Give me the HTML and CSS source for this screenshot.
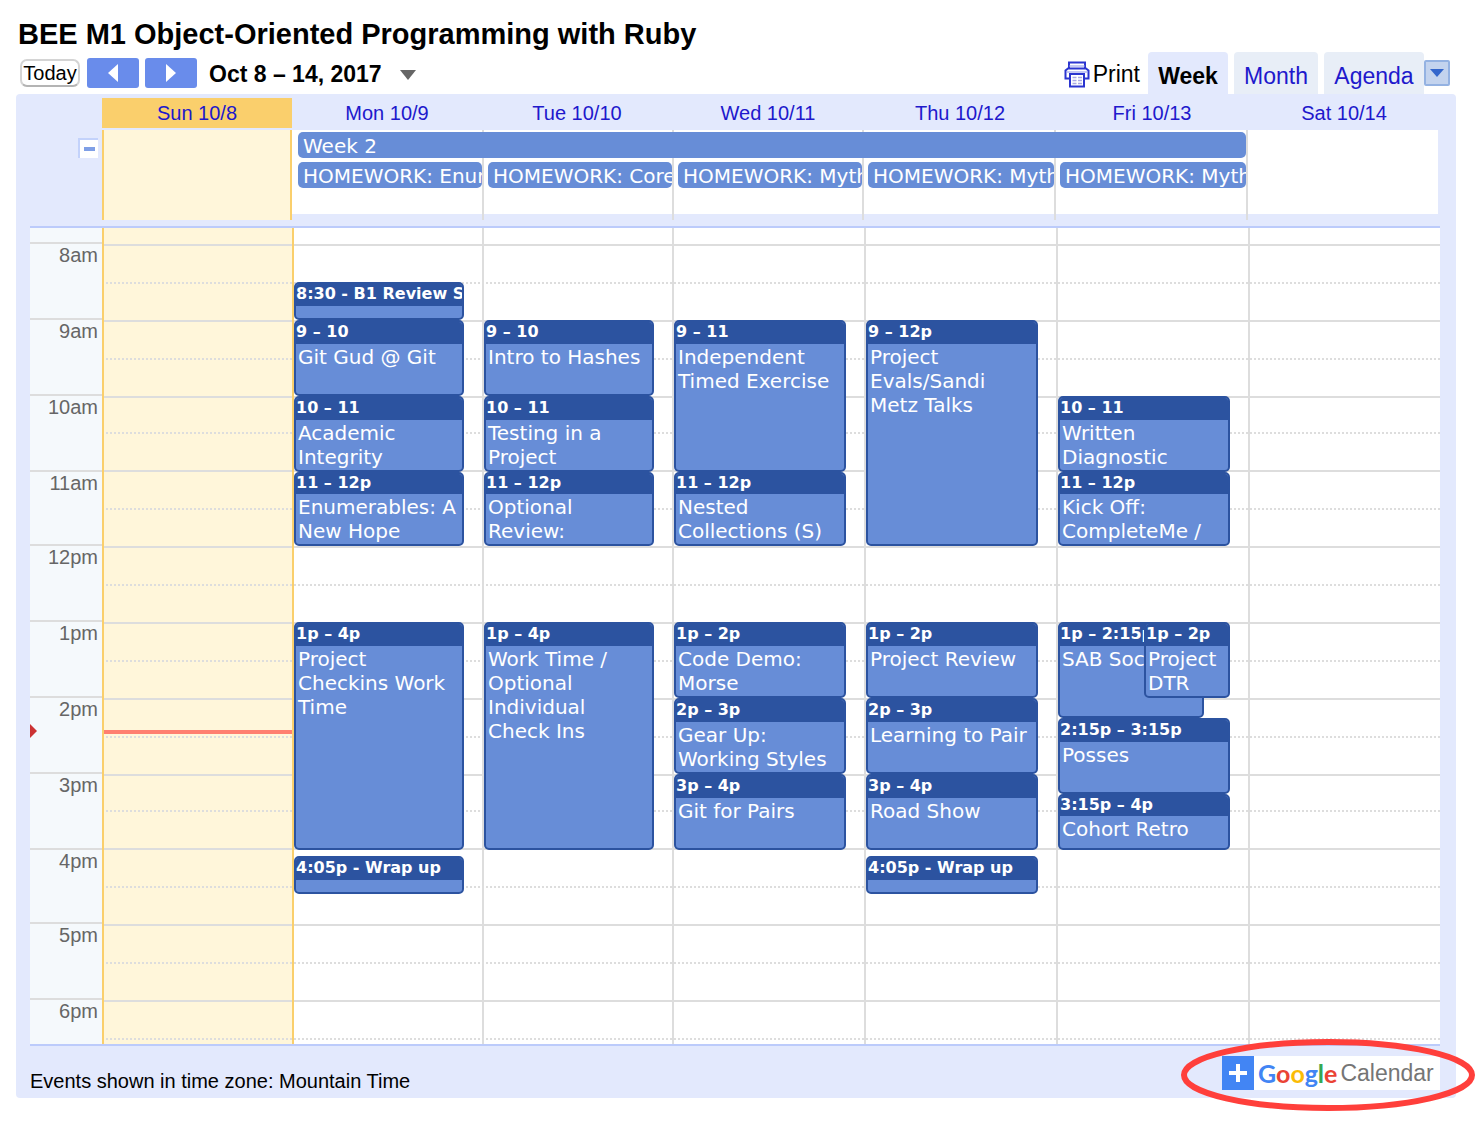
FILE: index.html
```html
<!DOCTYPE html>
<html lang="en">
<head>
<meta charset="utf-8">
<title>BEE M1 Object-Oriented Programming with Ruby</title>
<link rel="stylesheet" href="styles.css">
</head>
<body>
<main class="calendar">
  <h1 class="title">BEE M1 Object-Oriented Programming with Ruby</h1>

  <div class="toolbar">
    <button class="today" type="button">Today</button>
    <button class="step" type="button" aria-label="Previous week"><svg width="10" height="18" viewBox="0 0 10 18"><path d="M10 0V18L0 9z" fill="#fff"/></svg></button>
    <button class="step" type="button" aria-label="Next week"><svg width="10" height="18" viewBox="0 0 10 18"><path d="M0 0V18L10 9z" fill="#fff"/></svg></button>
    <h2 class="range">Oct 8 – 14, 2017</h2>
    <button class="pick" type="button" aria-label="Choose date"><svg width="16" height="10" viewBox="0 0 16 10"><path d="M0 0H16L8 10z" fill="#666"/></svg></button>

    <a class="print" href="#">
      <svg width="26" height="27" viewBox="0 0 26 27" fill="none" stroke="#2b35d0" stroke-width="2">
        <path d="M5 8V1.500H21V8" fill="#fff"/>
        <path d="M5 5H21" stroke="#8b93ea" stroke-width="1"/>
        <path d="M5 17.500H1.500V9.500L4 7.500H22L24.500 9.500V17.500H21" fill="#fff"/>
        <path d="M3 11H23" stroke="#8b93ea" stroke-width="1"/>
        <path d="M6 13H20V25.500H6z" fill="#fff"/>
        <path d="M8.500 16.500H18M8.500 19.500H18M8.500 22.500H18" stroke="#a9a9e4" stroke-width="1.500" stroke-dasharray="4 1.500"/>
      </svg>
      <span>Print</span>
    </a>
    <nav class="tabs">
      <a class="tab tab-active" href="#">Week</a>
      <a class="tab" href="#">Month</a>
      <a class="tab" href="#">Agenda</a>
    </nav>
    <button class="more" type="button" aria-label="More calendars"><svg width="14" height="8" viewBox="0 0 14 8"><path d="M0 0H14L7 8z" fill="#3366cc"/></svg></button>
  </div>

  <section class="panel">
    <div class="head-row">
      <a class="day-name day-name-today" href="#">Sun 10/8</a>
      <a class="day-name" href="#">Mon 10/9</a>
      <a class="day-name" href="#">Tue 10/10</a>
      <a class="day-name" href="#">Wed 10/11</a>
      <a class="day-name" href="#">Thu 10/12</a>
      <a class="day-name" href="#">Fri 10/13</a>
      <a class="day-name" href="#">Sat 10/14</a>
    </div>

    <div class="allday">
      <button class="collapse" type="button" aria-label="Collapse all-day events"></button>
      <div class="cell cell-today"></div>
      <div class="cell cell-mon"></div>
      <div class="cell cell-tue"></div>
      <div class="cell cell-wed"></div>
      <div class="cell cell-thu"></div>
      <div class="cell cell-fri"></div>
      <div class="cell cell-sat"></div>
      <div class="bar bar-week">Week 2</div>
      <div class="bar bar-mon">HOMEWORK: Enumerables</div>
      <div class="bar bar-tue">HOMEWORK: Core Types</div>
      <div class="bar bar-wed">HOMEWORK: Mythical Creatures</div>
      <div class="bar bar-thu">HOMEWORK: Mythical Creatures</div>
      <div class="bar bar-fri">HOMEWORK: Mythical Creatures</div>
    </div>

    <div class="schedule">
      <div class="hours">
        <span>8am</span><span>9am</span><span>10am</span><span>11am</span><span>12pm</span><span>1pm</span><span>2pm</span><span>3pm</span><span>4pm</span><span>5pm</span><span>6pm</span>
      </div>
      <svg class="now-marker" width="7" height="14" viewBox="0 0 7 14"><path d="M0 0L7 7L0 14z" fill="#cc3333"/></svg>

      <div class="today-fill"></div>
      <div class="lines">
        <i></i><i></i><i></i><i></i><i></i><i></i><i></i><i></i><i></i><i></i><i></i><i></i><i></i><i></i><i></i><i></i><i></i><i></i><i></i><i></i><i></i><i></i>
      </div>
      <div class="now-line"></div>

      <div class="day day-sun"></div>

      <div class="day day-mon">
        <div class="event from-0830 to-0900"><h3>8:30 - B1 Review Session</h3></div>
        <div class="event from-0900 to-1000"><h3>9 – 10</h3><p>Git Gud @ Git</p></div>
        <div class="event from-1000 to-1100"><h3>10 – 11</h3><p>Academic Integrity</p></div>
        <div class="event tight from-1100 to-1200"><h3>11 – 12p</h3><p>Enumerables: A New Hope</p></div>
        <div class="event from-1300 to-1600"><h3>1p – 4p</h3><p>Project Checkins Work Time</p></div>
        <div class="event wrap-up"><h3>4:05p - Wrap up</h3></div>
      </div>

      <div class="day day-tue">
        <div class="event from-0900 to-1000"><h3>9 – 10</h3><p>Intro to Hashes</p></div>
        <div class="event from-1000 to-1100"><h3>10 – 11</h3><p>Testing in a Project</p></div>
        <div class="event tight from-1100 to-1200"><h3>11 – 12p</h3><p>Optional Review:</p></div>
        <div class="event from-1300 to-1600"><h3>1p – 4p</h3><p>Work Time / Optional Individual Check Ins</p></div>
      </div>

      <div class="day day-wed">
        <div class="event from-0900 to-1100"><h3>9 – 11</h3><p>Independent Timed Exercise</p></div>
        <div class="event tight from-1100 to-1200"><h3>11 – 12p</h3><p>Nested Collections (S)</p></div>
        <div class="event from-1300 to-1400"><h3>1p – 2p</h3><p>Code Demo: Morse</p></div>
        <div class="event from-1400 to-1500"><h3>2p – 3p</h3><p>Gear Up: Working Styles</p></div>
        <div class="event from-1500 to-1600"><h3>3p – 4p</h3><p>Git for Pairs</p></div>
      </div>

      <div class="day day-thu">
        <div class="event from-0900 to-1200"><h3>9 – 12p</h3><p>Project Evals/Sandi Metz Talks</p></div>
        <div class="event from-1300 to-1400"><h3>1p – 2p</h3><p>Project Review</p></div>
        <div class="event from-1400 to-1500"><h3>2p – 3p</h3><p>Learning to Pair</p></div>
        <div class="event from-1500 to-1600"><h3>3p – 4p</h3><p>Road Show</p></div>
        <div class="event wrap-up"><h3>4:05p - Wrap up</h3></div>
      </div>

      <div class="day day-fri">
        <div class="event from-1000 to-1100"><h3>10 – 11</h3><p>Written Diagnostic</p></div>
        <div class="event tight from-1100 to-1200"><h3>11 – 12p</h3><p>Kick Off: CompleteMe /</p></div>
        <div class="event under from-1300 to-1415"><h3>1p – 2:15p</h3><p>SAB Social</p></div>
        <div class="event over from-1300 to-1400"><h3>1p – 2p</h3><p>Project DTR</p></div>
        <div class="event from-1415 to-1515"><h3>2:15p – 3:15p</h3><p>Posses</p></div>
        <div class="event tight from-1515 to-1600"><h3>3:15p – 4p</h3><p>Cohort Retro</p></div>
      </div>

      <div class="day day-sat"></div>
    </div>

    <footer class="footer">
      <span class="zone">Events shown in time zone: Mountain Time</span>
      <a class="gcal" href="#">
        <svg class="plus" width="32" height="34" viewBox="0 0 32 34"><path fill="#4285f4" d="M0 0H32V34H0z"/><path d="M16 8V26M7 17H25" stroke="#fff" stroke-width="4"/></svg>
        <span class="google"><b class="blue">G</b><b class="red">o</b><b class="yellow">o</b><b class="blue">g</b><b class="green">l</b><b class="red">e</b></span>
        <span class="product">Calendar</span>
        <svg class="ring" width="296" height="74" viewBox="0 0 296 74"><ellipse cx="148" cy="37" rx="144" ry="33" fill="none" stroke="#ff3f3b" stroke-width="6"/></svg>
      </a>
    </footer>
  </section>
</main>
</body>
</html>
```

FILE: styles.css
```css
* { box-sizing: border-box; }

body {
  margin: 0;
  background: #fff;
  color: #000;
  font: 20px/24px "Liberation Sans", Arial, sans-serif;
}

h1, h2, h3, p { margin: 0; }
a { color: #2018cc; text-decoration: none; }
button { font: inherit; padding: 0; border: 0; cursor: pointer; }
svg { display: block; flex: none; }

.calendar { padding: 16px 24px 24px 16px; }

.title {
  padding-left: 2px;
  font-size: 29px;
  line-height: 36px;
}

/* Toolbar */
.toolbar {
  display: flex;
  align-items: center;
  height: 42px;
  padding: 0 6px 0 4px;
}
.today {
  width: 60px;
  height: 28px;
  margin-right: 7px;
  border: 2px solid #d4d4d4;
  border-bottom-color: #b4b4b4;
  border-radius: 7px;
  background: #fff;
  color: #000;
}
.step {
  display: flex;
  align-items: center;
  justify-content: center;
  width: 52px;
  height: 30px;
  margin-right: 6px;
  border-radius: 3px;
  background: #698ceb;
}
.range {
  margin-left: 6px;
  padding-top: 2px;
  font-size: 23px;
}
.pick {
  margin-left: 18px;
  padding-top: 4px;
  background: none;
}
.print {
  display: flex;
  align-items: center;
  gap: 3px;
  margin-left: auto;
  margin-right: 8px;
  padding-top: 2px;
  color: #000;
  font-size: 23px;
}
.tabs {
  display: grid;
  grid-template-columns: 80px 84px 100px;
  gap: 6px;
  align-self: stretch;
}
.tab {
  padding-top: 12px;
  border-radius: 4px 4px 0 0;
  background: #e8eef7;
  font-size: 23px;
  text-align: center;
}
.tab-active {
  background: #e3e9fd;
  color: #000;
  font-weight: bold;
}
.more {
  display: flex;
  align-items: center;
  justify-content: center;
  width: 26px;
  height: 26px;
  border: 2px solid #94b2e2;
  border-radius: 2px;
  background: #c3d3ee;
}

/* Panel */
.panel {
  padding: 4px 16px 5px 14px;
  border-radius: 4px;
  background: #e3e9fd;
}

.head-row {
  display: grid;
  grid-template-columns: 72px repeat(3, 190fr) repeat(4, 192fr);
  margin-bottom: 2px;
}
.day-name {
  line-height: 30px;
  text-align: center;
}
.day-name:first-child { grid-column: 2; }
.day-name-today { background: #facf6c; }

.allday {
  display: grid;
  grid-template-columns: 72px repeat(4, 190fr) repeat(3, 192fr);
  grid-template-rows: repeat(3, 30px);
  margin: 0 2px 6px 0;
}
.collapse {
  grid-area: 1 / 1;
  justify-self: end;
  width: 20px;
  height: 20px;
  margin: 8px 4px 0 0;
  border: 2px solid #c3d2fb;
  border-width: 2px 0 0 2px;
  background: linear-gradient(#7f9fe6, #7f9fe6) no-repeat center / 11px 4px #fff;
}
.cell {
  grid-row: 1 / 4;
  border-left: 2px solid #ddd;
  background: linear-gradient(#fff, #fff) no-repeat 0 0 / 100% 84px;
}
.cell-today {
  grid-column: 2;
  border: solid #facf6c;
  border-width: 0 2px;
  background: #fff6da;
}
.cell-mon { grid-column: 3; border-left: 0; }
.cell-tue { grid-column: 4; }
.cell-wed { grid-column: 5; }
.cell-thu { grid-column: 6; }
.cell-fri { grid-column: 7; }
.cell-sat { grid-column: 8; }

.bar {
  min-width: 0;
  height: 26px;
  margin: 2px 0 0 6px;
  padding-left: 5px;
  overflow: hidden;
  border-radius: 5px;
  background: #678dd7;
  color: #fff;
  font: 20px/28px "DejaVu Sans", Verdana, sans-serif;
  white-space: nowrap;
}
.bar-week { grid-area: 1 / 3 / 2 / 8; }
.bar-mon { grid-area: 2 / 3; }
.bar-tue { grid-area: 2 / 4; }
.bar-wed { grid-area: 2 / 5; }
.bar-thu { grid-area: 2 / 6; }
.bar-fri { grid-area: 2 / 7; }

/* Time grid: hour column, ruled lines and one column per day, all in one row */
.schedule {
  display: grid;
  grid-template-columns: 72px repeat(3, 190fr) repeat(4, 192fr);
  grid-template-rows: 816px;
  border: solid #bccbfb;
  border-width: 2px 0;
  background: #fff;
}
.hours {
  grid-area: 1 / 1;
  display: grid;
  grid-template-rows: repeat(3, 76px) 74px repeat(4, 76px) 74px 76px 46px;
  padding-top: 14px;
  overflow: hidden;
  background: #f5f9fc;
  color: #666;
  line-height: 22px;
  text-align: right;
}
.hours span {
  padding-right: 4px;
  border-top: 2px solid #ddd;
}
.now-marker {
  grid-area: 1 / 1;
  margin-top: 496px;
}
.today-fill {
  grid-area: 1 / 2;
  background: #fff6da;
}
.lines {
  grid-area: 1 / 2 / 2 / 9;
  display: grid;
  grid-template-rows: repeat(4, 38px) 36px repeat(9, 38px) 36px repeat(6, 38px) 6px;
  padding-top: 16px;
}
.lines i { border-top: 2px solid #ddd; }
.lines i:nth-child(even) {
  border: 0;
  background: repeating-linear-gradient(90deg, #ddd 0 2px, transparent 2px 4px) no-repeat 0 0 / 100% 2px;
}
.now-line {
  grid-area: 1 / 2;
  height: 4px;
  margin-top: 502px;
  background: #ff7f70;
}

.day {
  display: grid;
  grid-template-columns: 100%;
  grid-template-rows: 16px repeat(12, 19px) 18px 19px 18px 19px repeat(4, 19px) 19px 19px 19px 19px 20px 18px 19px 19px 20px 18px 19px 19px;
  min-width: 0;
  padding-right: 18px;
  border-left: 2px solid #ddd;
}
.day-sun { grid-area: 1 / 2; border-color: #facf6c; }
.day-mon { grid-area: 1 / 3; border-color: #facf6c; }
.day-tue { grid-area: 1 / 4; }
.day-wed { grid-area: 1 / 5; }
.day-thu { grid-area: 1 / 6; }
.day-fri { grid-area: 1 / 7; }
.day-sat { grid-area: 1 / 8; }

.event {
  grid-column: 1;
  min-height: 0;
  overflow: hidden;
  border: 2px solid #2c53a0;
  border-radius: 5px;
  background: #678dd7;
  color: #fff;
  font: 20px/24px "DejaVu Sans", Verdana, sans-serif;
}
.event h3 {
  height: 22px;
  background: #2c53a0;
  font-size: 16px;
  line-height: 20px;
  white-space: nowrap;
}
.event p { padding: 1px 0 0 2px; }
.tight h3 { height: 20px; line-height: 18px; }
.under { width: 85%; }
.over { margin-left: 50%; }

.from-0830 { grid-row-start: 4; }
.from-0900 { grid-row-start: 6; }
.from-1000 { grid-row-start: 10; }
.from-1100 { grid-row-start: 14; }
.from-1300 { grid-row-start: 22; }
.from-1400 { grid-row-start: 26; }
.from-1415 { grid-row-start: 27; }
.from-1500 { grid-row-start: 30; }
.from-1515 { grid-row-start: 31; }
.to-0900 { grid-row-end: 6; }
.to-1000 { grid-row-end: 10; }
.to-1100 { grid-row-end: 14; }
.to-1200 { grid-row-end: 18; }
.to-1400 { grid-row-end: 26; }
.to-1415 { grid-row-end: 27; }
.to-1500 { grid-row-end: 30; }
.to-1515 { grid-row-end: 31; }
.to-1600 { grid-row-end: 34; }
.wrap-up {
  grid-row-start: 34;
  height: 38px;
  margin-top: 6px;
}

/* Footer */
.footer {
  display: flex;
  justify-content: space-between;
  align-items: center;
  padding-top: 7px;
}
.zone { padding-top: 16px; }
.gcal {
  position: relative;
  display: flex;
  align-items: center;
  width: 218px;
  height: 34px;
  background: #fff;
}
.google {
  margin-left: 4px;
  font: 25px/32px Lato, sans-serif;
}
.product {
  margin-left: 3px;
  color: #757575;
  font-size: 23px;
}
.blue { color: #4285f4; }
.red { color: #ea4335; }
.yellow { color: #fbbc05; }
.green { color: #34a853; }
.ring {
  position: absolute;
  top: -18px;
  left: -42px;
  pointer-events: none;
}
```
